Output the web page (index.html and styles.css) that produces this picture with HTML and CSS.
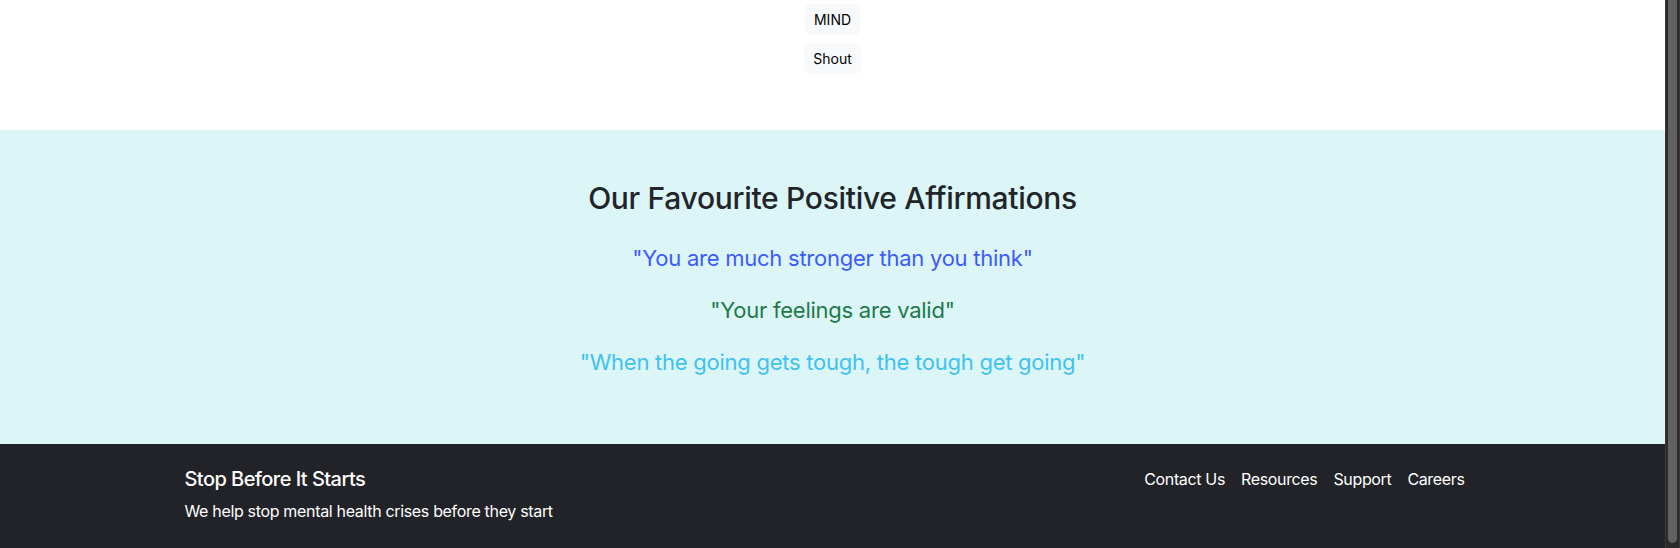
FILE: index.html
```html
<!DOCTYPE html>
<html lang="en">
<head>
<meta charset="utf-8">
<title>Stop Before It Starts</title>
<link rel="stylesheet" href="styles.css">
</head>
<body>
<div class="viewport">
  <div class="page">
    <section class="orgs">
      <ul class="org-list">
        <li><a class="btn-light" href="#">MIND</a></li>
        <li><a class="btn-light" href="#">Shout</a></li>
      </ul>
    </section>
    <section class="affirm">
      <h2 class="affirm-title">Our Favourite Positive Affirmations</h2>
      <p class="quote quote-blue">"You are much stronger than you think"</p>
      <p class="quote quote-green">"Your feelings are valid"</p>
      <p class="quote quote-cyan">"When the going gets tough, the tough get going"</p>
    </section>
    <footer class="footer">
      <div class="container">
        <div class="brand">
          <h5 class="brand-title">Stop Before It Starts</h5>
          <p class="brand-text">We help stop mental health crises before they start</p>
        </div>
        <ul class="foot-nav">
          <li><a href="#">Contact Us</a></li>
          <li><a href="#">Resources</a></li>
          <li><a href="#">Support</a></li>
          <li><a href="#">Careers</a></li>
        </ul>
      </div>
    </footer>
  </div>
  <div class="scrollbar"><div class="thumb"></div></div>
</div>
</body>
</html>
```

FILE: styles.css
```css
* { box-sizing: border-box; }
html, body {
  margin: 0;
  padding: 0;
  height: 548px;
  overflow: hidden;
}
body {
  font-family: Inter, "Noto Sans", "Liberation Sans", sans-serif;
  color: #212529;
  background: #fff;
}
.viewport {
  display: flex;
  height: 548px;
}
.page {
  flex: 1;
  display: flex;
  flex-direction: column;
  min-width: 0;
}
.orgs {
  height: 130px;
  flex: none;
  padding-top: 4px;
}
.org-list {
  list-style: none;
  margin: 0;
  padding: 0;
  display: flex;
  flex-direction: column;
  align-items: center;
  gap: 8px;
}
.btn-light {
  display: inline-block;
  padding: 4px 8px;
  font-size: 14px;
  line-height: 21px;
  color: #000;
  text-decoration: none;
  background: #f8f9fa;
  border: 1px solid #f8f9fa;
  border-radius: 6px;
}
.affirm {
  height: 314px;
  flex: none;
  background: #dcf5f7;
  text-align: center;
  padding-top: 50px;
}
.affirm-title {
  margin: 0 0 28px;
  font-size: 30px;
  line-height: 36px;
  letter-spacing: -0.3px;
  font-weight: 500;
  color: #212529;
}
.quote {
  margin: 0 0 24px;
  font-size: 22px;
  line-height: 28px;
  letter-spacing: -0.25px;
  font-weight: 400;
}
.quote-blue { color: #3c5bfd; }
.quote-green { color: #1e7a4a; }
.quote-cyan { color: #3fc2ee; }
.footer {
  flex: 1;
  background: #212328;
  color: #fff;
}
.container {
  max-width: 1320px;
  margin: 0 auto;
  padding: 23px 12px 0;
  display: flex;
  justify-content: space-between;
  align-items: flex-start;
}
.brand-title {
  margin: 0 0 8px;
  font-size: 20px;
  line-height: 24px;
  letter-spacing: -0.55px;
  font-weight: 500;
}
.brand-text {
  margin: 0;
  font-size: 16px;
  line-height: 24px;
  letter-spacing: -0.33px;
}
.foot-nav {
  list-style: none;
  margin: 0;
  padding: 0 16px 0 0;
  display: flex;
  gap: 16px;
}
.foot-nav a {
  color: #fff;
  text-decoration: none;
  font-size: 16px;
  line-height: 24px;
  letter-spacing: -0.35px;
}
.scrollbar {
  width: 15px;
  flex: none;
  background: #2b2b2b;
  border-left: 1px solid #3a3a3a;
  border-right: 1px solid #3a3a3a;
  padding: 0 2px;
}
.thumb {
  width: 9px;
  height: 543px;
  background: #626262;
  border-radius: 0 0 5px 5px;
}
```
